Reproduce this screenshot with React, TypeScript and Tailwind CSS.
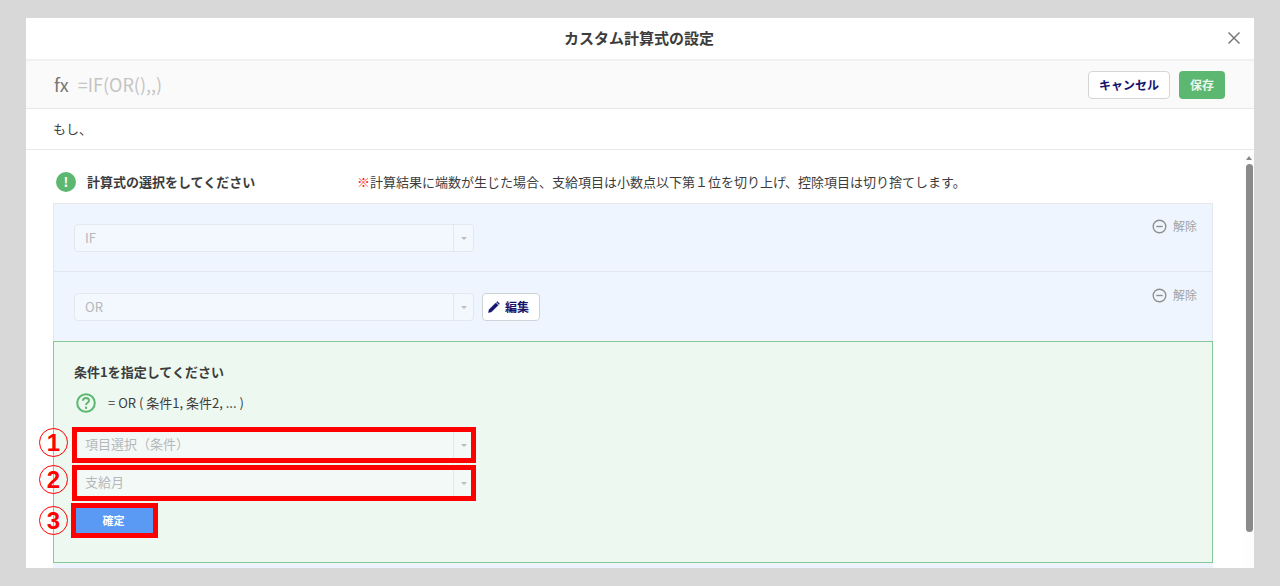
const jp = { fontFamily: '"Noto Sans CJK JP", "Noto Sans", sans-serif' };

function Arrow({ className }: { className: string }) {
  return <span className={`w-0 h-0 border-x-[3px] border-x-transparent border-t-[3px] ${className}`}></span>;
}

function SelectBox({ label, tone }: { label: string; tone: "blue" | "green" }) {
  const box = tone === "blue" ? "bg-[#f3f7fe] border-[#e3e8f0]" : "bg-[#f3f9f6] border-[#e3eae6]";
  const line = tone === "blue" ? "border-[#e3e8f0]" : "border-[#e3eae6]";
  const text = tone === "blue" ? "" : "pb-[3px]";
  return (
    <div className={`w-[400px] h-[28px] flex items-center rounded-[4px] border ${box}`}>
      <div className={`flex-1 pl-[10px] text-[13px] text-[#b5b8bb] ${text}`}>{label}</div>
      <div className={`w-[20px] h-full flex items-center justify-center border-l ${line}`}>
        <Arrow className="border-t-[#b9bcbf]" />
      </div>
    </div>
  );
}

function Release() {
  return (
    <div className="flex items-center gap-[6px] text-[12px] text-[#a3a3a3]">
      <svg width="15" height="15" viewBox="0 0 15 15" fill="none" stroke="#8f8f8f" strokeWidth="1.4">
        <circle cx="7.5" cy="7.5" r="6.3" />
        <path d="M4.3 7.5h6.4" />
      </svg>
      解除
    </div>
  );
}

function Circled({ n, className }: { n: number; className: string }) {
  return (
    <span className={`absolute w-[29px] h-[29px] rounded-full border border-[#ff0000] flex items-center justify-center text-[#ff0000] text-[24px] font-bold leading-none ${className}`} style={{ fontFamily: '"Liberation Sans", sans-serif' }}>
      {n}
    </span>
  );
}

export default function App() {
  return (
    <div className="h-[586px] overflow-hidden bg-[#d8d8d8] px-[26px] pt-[18px] pb-[18px]" style={jp}>
      <div className="h-[550px] bg-white flex flex-col">
        <div className="h-[43px] shrink-0 flex items-center justify-center relative border-b-2 border-[#f0f0f0] pr-[2px]">
          <h1 className="text-[15px] font-bold text-[#3c3c3c]">カスタム計算式の設定</h1>
          <svg className="absolute right-[13px] top-[13px]" width="14" height="14" viewBox="0 0 14 14" stroke="#707070" strokeWidth="1.4" fill="none">
            <path d="M1.5 1.5l11 11M12.5 1.5l-11 11" />
          </svg>
        </div>

        <div className="h-[48px] shrink-0 flex items-center bg-[#fafafa] border-b border-[#e8e8e8] pl-[28px] pr-[29px]">
          <span className="text-[18px] text-[#757575] mr-[9px]">fx</span>
          <span className="text-[18px] text-[#c4c4c4] flex-1">=IF(OR(),,)</span>
          <button className="w-[82px] h-[28px] rounded-[4px] bg-white border border-[#d5d5d5] text-[12px] font-bold text-[#14146e]">キャンセル</button>
          <button className="w-[46px] h-[28px] ml-[9px] rounded-[4px] bg-[#5cb870] text-[12px] font-bold text-[#e9f6ec]">保存</button>
        </div>

        <div className="h-[41px] shrink-0 flex items-center pl-[27px] border-b border-[#e8e8e8] text-[13px] text-[#3c3c3c]">もし、</div>

        <div className="flex-1 min-h-0 flex overflow-hidden">
          <div className="flex-1 min-w-0 pl-[27px] pr-[31px] pt-[21px]">
            <div className="h-[21px] flex items-center pl-[2px]">
              <span className="ml-[1px] w-[20px] h-[20px] rounded-full bg-[#5cb870] text-white text-[13px] font-bold flex items-center justify-center">!</span>
              <span className="ml-[11px] w-[270px] text-[13px] font-bold text-[#3c3c3c]">計算式の選択をしてください</span>
              <span className="text-[13px] text-[#3c3c3c]"><span className="text-[#ff2a2a]">※</span>計算結果に端数が生じた場合、支給項目は小数点以下第１位を切り上げ、控除項目は切り捨てします。</span>
            </div>

            <div className="mt-[11px] border-t border-[#e6e8ec]">
              <div className="h-[68px] bg-[#eef5fe] border-x border-b border-[#e3e7ee] flex justify-between pl-[20px] pr-[15px] pt-[20px]">
                <SelectBox label="IF" tone="blue" />
                <div className="-mt-[7px] h-[20px]"><Release /></div>
              </div>
              <div className="h-[69px] bg-[#eef5fe] border-x border-[#e3e7ee] flex justify-between pl-[20px] pr-[15px] pt-[21px]">
                <div className="flex items-start">
                  <SelectBox label="OR" tone="blue" />
                  <button className="ml-[8px] w-[58px] h-[28px] rounded-[4px] bg-white border border-[#cfd3d8] flex items-center pl-[5px] gap-[5px] text-[12px] font-bold text-[#14146e]">
                    <svg width="12" height="12" viewBox="0 0 12 12" fill="#14146e" stroke="#14146e" strokeWidth="0.5">
                      <path d="M0.5 11.5l0.7-3L7.8 1.9l2.3 2.3-6.6 6.6zM8.6 1.1l0.7-0.6 2.2 2.2-0.7 0.7z" />
                    </svg>
                    編集
                  </button>
                </div>
                <div className="-mt-[7px] h-[20px]"><Release /></div>
              </div>

              <div className="h-[222px] bg-[#edf8f1] border border-[#86c997] pl-[20px] pt-[20px]">
                <p className="text-[13px] font-bold leading-[19px] text-[#3c3c3c]">条件1を指定してください</p>
                <div className="mt-[11px] h-[22px] flex items-center pl-[2px]">
                  <svg width="20" height="20" viewBox="0 0 20 20" fill="none">
                    <circle cx="10" cy="10" r="8.8" stroke="#5cb870" strokeWidth="2" />
                    <path d="M7 7.8c0-1.8 1.3-2.9 3-2.9s3 1.1 3 2.6c0 2.2-3 2.3-3 4.6" stroke="#5cb870" strokeWidth="2" />
                    <circle cx="10" cy="14.8" r="1.2" fill="#5cb870" />
                  </svg>
                  <span className="ml-[12px] text-[13px] text-[#3c3c3c]">= OR ( 条件1, 条件2, ... )</span>
                </div>

                <div className="relative mt-[17px] w-[400px]">
                  <SelectBox label="項目選択（条件）" tone="green" />
                  <span className="absolute -left-[2px] -right-[2px] -top-[4px] h-[36px] border-[5px] border-[#ff0000]"></span>
                  <Circled n={1} className="-left-[35px] -top-[3px]" />
                </div>
                <div className="relative mt-[10px] w-[400px]">
                  <SelectBox label="支給月" tone="green" />
                  <span className="absolute -left-[2px] -right-[2px] -top-[4px] h-[36px] border-[5px] border-[#ff0000]"></span>
                  <Circled n={2} className="-left-[35px] -top-[4px]" />
                </div>
                <div className="relative mt-[11px] w-[77px] ml-[2px]">
                  <button className="block w-[77px] h-[25px] bg-[#5a9af5] text-white text-[11px] font-bold pr-[2px]">確定</button>
                  <span className="absolute -inset-[5px] border-[5px] border-[#ff0000]"></span>
                  <Circled n={3} className="-left-[37px] -top-[2px]" />
                </div>
              </div>
              <div className="h-[6px] bg-[#eef3fd]"></div>
            </div>
          </div>

          <div className="w-[10px] flex flex-col items-center bg-[#fdfdfd]">
            <span className="mt-[6px] w-0 h-0 border-x-[3.5px] border-x-transparent border-b-[4px] border-b-[#8a8a8a]"></span>
            <div className="mt-[4px] w-[7px] h-[368px] rounded-full bg-[#8a8a8a]"></div>
          </div>
        </div>
      </div>
    </div>
  );
}
